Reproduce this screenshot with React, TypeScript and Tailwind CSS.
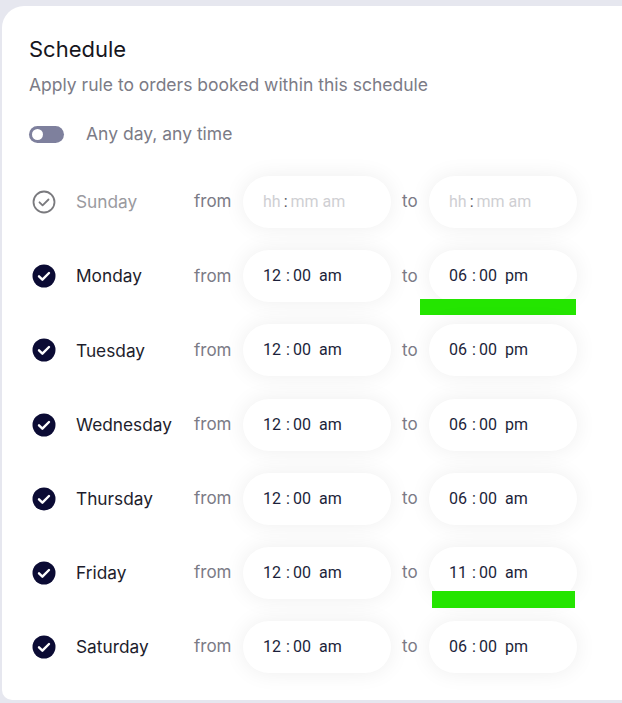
import React from 'react';

type Day = {
    name: string;
    enabled: boolean;
    from?: [string, string, string];
    to?: [string, string, string];
    mark?: 'monday' | 'friday';
};

const days: Day[] = [
    { name: 'Sunday', enabled: false },
    { name: 'Monday', enabled: true, from: ['12', '00', 'am'], to: ['06', '00', 'pm'], mark: 'monday' },
    { name: 'Tuesday', enabled: true, from: ['12', '00', 'am'], to: ['06', '00', 'pm'] },
    { name: 'Wednesday', enabled: true, from: ['12', '00', 'am'], to: ['06', '00', 'pm'] },
    { name: 'Thursday', enabled: true, from: ['12', '00', 'am'], to: ['06', '00', 'am'] },
    { name: 'Friday', enabled: true, from: ['12', '00', 'am'], to: ['11', '00', 'am'], mark: 'friday' },
    { name: 'Saturday', enabled: true, from: ['12', '00', 'am'], to: ['06', '00', 'pm'] },
];

const CheckIcon: React.FC<{ on: boolean }> = ({ on }) =>
    on ? (
        <svg width="24" height="24" viewBox="0 0 24 24">
            <circle cx="12" cy="12" r="11.5" fill="#0b0b34" />
            <path d="M7 12.3l3.4 3.4L17 9" fill="none" stroke="#fff" strokeWidth="2.4" strokeLinecap="round" strokeLinejoin="round" />
        </svg>
    ) : (
        <svg width="24" height="24" viewBox="0 0 24 24">
            <circle cx="12" cy="12" r="10.5" fill="none" stroke="#7a7a7e" strokeWidth="1.8" />
            <path d="M7.5 12.3l3.1 3.1L16.5 9.5" fill="none" stroke="#7a7a7e" strokeWidth="1.8" strokeLinecap="round" strokeLinejoin="round" />
        </svg>
    );

const TimeField: React.FC<{ value?: [string, string, string]; mark?: 'monday' | 'friday' }> = ({ value, mark }) => (
    <div className="relative w-[148px] h-[52px] rounded-full bg-white shadow-[0_0_22px_rgba(0,0,0,0.07)] flex items-center pl-[20px] text-[16px] [font-family:Roboto,'Liberation_Sans',Arial,sans-serif]">
        {value ? (
            <div className="flex items-center text-[#1c1f3a]">
                <span className="w-[22px]">{value[0]}</span>
                <span className="w-[6px] text-center">:</span>
                <span className="ml-[2px]">{value[1]}</span>
                <span className="ml-[8px]">{value[2]}</span>
            </div>
        ) : (
            <div className="flex items-center text-[#cfcfd3]">
                <span>hh</span>
                <span className="mx-[3px] text-[#55555e]">:</span>
                <span>mm am</span>
            </div>
        )}
        {mark === 'monday' && <div className="absolute left-[-9px] top-[49px] w-[156px] h-[16px] bg-[#24e500]" />}
        {mark === 'friday' && <div className="absolute left-[3px] top-[44px] w-[143px] h-[17px] bg-[#24e500]" />}
    </div>
);

const App: React.FC = () => {
    return (
        <div className="min-h-[703px] bg-[#e6e7ef] pt-[6px] pl-[2px] overflow-hidden [font-family:Inter,'Noto_Sans',sans-serif]">
            <div className="bg-white rounded-tl-[22px] rounded-bl-[10px] h-[694px] pl-[27px] pt-[29px]">
                <h1 className="text-[22px] leading-[28px] text-[#16161d]">Schedule</h1>
                <p className="mt-[10px] text-[17.5px] leading-[24px] text-[#7b7b86]">Apply rule to orders booked within this schedule</p>

                <div className="mt-[25px] flex items-center h-[24px]">
                    <div className="w-[35px] h-[17px] rounded-full bg-[#7e809d] flex items-center pl-[3px]">
                        <div className="w-[11px] h-[11px] rounded-full bg-white" />
                    </div>
                    <span className="ml-[22px] text-[17.5px] text-[#7b7b86]">Any day, any time</span>
                </div>

                <div className="mt-[19px] flex flex-col">
                    {days.map(d => (
                        <div key={d.name} className="h-[74.2px] flex items-center">
                            <div className="ml-[3px] w-[24px] h-[24px]">
                                <CheckIcon on={d.enabled} />
                            </div>
                            <span className={`ml-[20px] w-[118px] text-[17.3px] ${d.enabled ? 'text-[#1d1d2c]' : 'text-[#9a9aa0]'}`}>{d.name}</span>
                            <span className="w-[49px] text-[17px] text-[#7b7b86]">from</span>
                            <TimeField value={d.from} />
                            <span className="w-[38px] pl-[11px] text-[17px] text-[#7b7b86]">to</span>
                            <TimeField value={d.to} mark={d.mark} />
                        </div>
                    ))}
                </div>
            </div>
        </div>
    );
};

export default App;
